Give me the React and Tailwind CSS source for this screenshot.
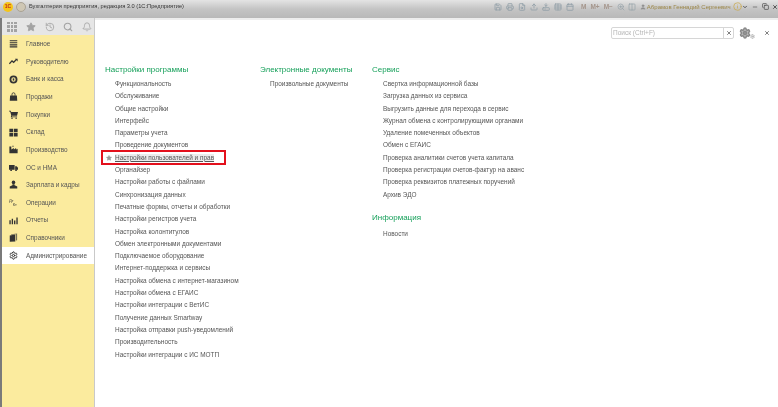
import React from 'react'
import { History, Search, Bell, X, Save, Printer, FileSearch, Upload, HardDriveDownload, Table, Calendar, ZoomIn, Columns2, Info, ChevronDown, Minus, Copy, Settings, Star, User } from 'lucide-react'

const Svg = ({ children, className = 'size-[9px]' }) => (
  <svg viewBox="0 0 12 12" className={`${className} shrink-0`} fill="currentColor">{children}</svg>
)

const MenuIcon = () => <Svg><path d="M1 1.5h10v1.6H1zM1 4.2h10v1.6H1zM1 6.9h10v1.6H1zM1 9.6h10v1.6H1z" /></Svg>
const TrendIcon = () => <Svg><path d="M.5 9 4 5.2l2.2 1.9L9.4 3.6" fill="none" stroke="currentColor" strokeWidth="1.7" /><path d="M8 2.4h3.5v3.5z" /></Svg>
const BankIcon = () => <Svg><path fillRule="evenodd" d="M6 .7a5.3 5.3 0 1 1 0 10.6A5.3 5.3 0 0 1 6 .7zm0 2.4a2.9 2.9 0 1 0 0 5.8 2.9 2.9 0 0 0 0-5.8z" /><path d="M5 4.5h2v3H5z" /></Svg>
const BagIcon = () => <Svg><path d="M1.5 4.5h9l.5 7H1z" /><path d="M4 5V3a2 2 0 0 1 4 0v2" fill="none" stroke="currentColor" strokeWidth="1.1" /></Svg>
const CartIcon = () => <Svg><path d="M0 1h2.4l.5 1.6H12l-1.3 5H4l-.2.9h7v1.1H2.4l.6-2.4L1.6 2.1H0z" /><circle cx="4" cy="11" r="1" /><circle cx="9.5" cy="11" r="1" /></Svg>
const GridIcon = () => <Svg><path d="M.5 1h5v4.6h-5zM6.5 1h5v4.6h-5zM.5 6.6h5v4.6h-5zM6.5 6.6h5v4.6h-5z" /></Svg>
const FactoryIcon = () => <Svg><path d="M.5 11V2h2.6v4L6.5 4v2l3-2v2l2-1v6z" /><path d="M4.5 1h1.6v1.4H4.5z" /></Svg>
const TruckIcon = () => <Svg><path d="M0 2.5h7.5v6.6H0zM8.2 4.4h2l1.8 2v2.7H8.2z" /><circle cx="2.8" cy="9.6" r="1.2" /><circle cx="9.4" cy="9.6" r="1.2" /></Svg>
const PersonIcon = () => <Svg><circle cx="6" cy="3.2" r="2.4" /><path d="M4.6 5.6h2.8v1.5l3.6 1.4v2.8H1V8.5l3.6-1.4z" /></Svg>
const OperationsIcon = () => (
  <svg viewBox="0 0 12 12" className="size-[9px] shrink-0" fill="currentColor">
    <text x="0" y="5" fontSize="5.4">Дт</text>
    <text x="5" y="11" fontSize="5.4">Кт</text>
  </svg>
)
const ChartIcon = () => <Svg><path d="M.5 5.5h1.8v5.5H.5zM3.6 3.5h1.8V11H3.6zM6.7 6h1.8v5H6.7zM9.8 2h1.8v9H9.8z" /></Svg>
const BooksIcon = () => <Svg><path d="M1 3.4 8.4 2v9.4L1 11.8z" /><path d="M3 1.6 10.8.6v9.2l-1.4.3V1.8l-6.4 .9z" opacity=".7" /></Svg>
const GridDots = () => (
  <div className="grid grid-cols-3 gap-[1px] size-[10px] shrink-0">
    {Array.from({ length: 9 }).map((_, i) => <span key={i} className="bg-[#a3a3a3]" />)}
  </div>
)

const navItems = [
  { label: 'Главное', icon: MenuIcon },
  { label: 'Руководителю', icon: TrendIcon },
  { label: 'Банк и касса', icon: BankIcon },
  { label: 'Продажи', icon: BagIcon },
  { label: 'Покупки', icon: CartIcon },
  { label: 'Склад', icon: GridIcon },
  { label: 'Производство', icon: FactoryIcon },
  { label: 'ОС и НМА', icon: TruckIcon },
  { label: 'Зарплата и кадры', icon: PersonIcon },
  { label: 'Операции', icon: OperationsIcon },
  { label: 'Отчеты', icon: ChartIcon },
  { label: 'Справочники', icon: BooksIcon },
  { label: 'Администрирование', icon: () => <Settings className="size-[9px] shrink-0" strokeWidth={2.6} />, active: true },
]

const settings = [
  'Функциональность', 'Обслуживание', 'Общие настройки', 'Интерфейс', 'Параметры учета', 'Проведение документов',
  'Настройки пользователей и прав', 'Органайзер', 'Настройки работы с файлами', 'Синхронизация данных',
  'Печатные формы, отчеты и обработки', 'Настройки регистров учета', 'Настройка колонтитулов',
  'Обмен электронными документами', 'Подключаемое оборудование', 'Интернет-поддержка и сервисы',
  'Настройка обмена с интернет-магазином', 'Настройки обмена с ЕГАИС', 'Настройки интеграции с ВетИС',
  'Получение данных Smartway', 'Настройка отправки push-уведомлений', 'Производительность', 'Настройки интеграции с ИС МОТП',
]

const service = [
  'Свертка информационной базы', 'Загрузка данных из сервиса', 'Выгрузить данные для перехода в сервис',
  'Журнал обмена с контролирующими органами', 'Удаление помеченных объектов', 'Обмен с ЕГАИС',
  'Проверка аналитики счетов учета капитала', 'Проверка регистрации счетов-фактур на аванс',
  'Проверка реквизитов платежных поручений', 'Архив ЭДО',
]

const Heading = ({ children }) => (
  <h2 className="h-[14px] text-[8px] leading-[14px] font-normal text-[#16a05a] whitespace-nowrap">{children}</h2>
)

const Link = ({ children, highlight }) => {
  if (highlight) {
    return (
      <li className="relative h-[12.3px] pl-[10px] whitespace-nowrap leading-[12.3px]">
        <Star className="absolute left-[1px] top-[3px] size-[6px] fill-[#9a9a9a] text-[#9a9a9a]" />
        <span className="underline bg-[#ececec]">{children}</span>
        <span className="absolute -left-[4px] -top-[2px] w-[125px] h-[15px] border-2 border-[#e3101c]" />
      </li>
    )
  }
  return <li className="h-[12.3px] pl-[10px] whitespace-nowrap leading-[12.3px]">{children}</li>
}

const toolIcons = [Save, Printer, FileSearch, Upload, HardDriveDownload, Table, Calendar]

export default function App() {
  return (
    <div className="w-[778px] h-[407px] overflow-hidden flex flex-col bg-white font-['Liberation_Sans',Arial,sans-serif] blur-[0.35px]">
      {/* Title bar */}
      <header className="h-[18px] shrink-0 flex items-center pb-[5px] bg-gradient-to-b from-[#e4e4e4] via-[#c4c4c4] to-[#b8b8b8]">
        <div className="ml-[3px] size-[10px] rounded-full bg-[#f5c518] flex items-center justify-center text-[5px] font-bold text-[#c2281c]">1С</div>
        <div className="ml-[3px] size-[10px] rounded-full bg-[#cfc7b4] border border-[#a9a294]" />
        <span className="ml-[3px] text-[5.7px] text-[#333333] whitespace-nowrap">Бухгалтерия предприятия, редакция 3.0 (1С:Предприятие)</span>
        <div className="ml-auto flex items-center w-[284px] shrink-0 text-[#93a0a8]">
          <div className="flex items-center gap-[4px]">
            {toolIcons.map((Icon, i) => <Icon key={i} className="size-[8px]" strokeWidth={2.5} />)}
          </div>
          <div className="ml-[7px] flex items-center gap-[4px] text-[6.5px] font-bold text-[#a5968c]">
            <span>M</span><span>M+</span><span>M−</span>
          </div>
          <ZoomIn className="ml-[4px] size-[8px]" />
          <Columns2 className="ml-[3px] size-[8px]" />
          <User className="ml-[4px] size-[6px] fill-[#8f8f8f] text-[#8f8f8f]" />
          <span className="ml-[1px] w-[85px] whitespace-nowrap text-[6px] leading-[10px] text-[#9c8748]">Абрамов Геннадий Сергеевич</span>
          <Info className="ml-[1px] size-[9px] text-[#c9a94f]" />
          <ChevronDown className="size-[6px] text-[#333333]" strokeWidth={3} />
          <Minus className="ml-[4px] size-[6px] text-[#333333]" />
          <Copy className="ml-[4px] size-[7px] text-[#333333]" />
          <X className="ml-[3px] size-[6px] text-[#333333]" strokeWidth={3} />
        </div>
      </header>

      <div className="flex-1 flex min-h-0">
        <div className="w-[2px] shrink-0 bg-[#7a7a7a]" />
        {/* Sidebar */}
        <aside className="w-[93px] shrink-0 flex flex-col bg-[#fbeb9e] border-r border-[#c9c9c9]">
          <div className="h-[17px] shrink-0 flex items-center gap-[8.75px] pl-[5px] bg-[#e6e6e6] text-[#a3a3a3]">
            <GridDots />
            <Star className="size-[10px] fill-[#a3a3a3]" />
            <History className="size-[10px]" />
            <Search className="size-[10px]" strokeWidth={2.6} />
            <Bell className="size-[10px]" />
          </div>
          <nav>
            {navItems.map(({ label, icon: Icon, active }) => (
              <div key={label} className={`h-[17.65px] flex items-center pl-[6.5px] text-[6.4px] whitespace-nowrap text-[#333333] ${active ? 'bg-white' : ''}`}>
                <Icon />
                <span className="ml-[8.5px] text-[#555555]">{label}</span>
              </div>
            ))}
          </nav>
        </aside>

        {/* Main */}
        <main className="flex-1 min-w-0 border-t-2 border-[#ededed]">
          <div className="flex justify-end items-center mt-[7px] h-[12px]">
            <div className="w-[123px] h-[12px] flex items-center border border-[#d6d6d6] rounded-[2px] text-[6.5px] text-[#b5b5b5] mr-[5px]">
              <span className="flex-1 pl-[1px]">Поиск (Ctrl+F)</span>
              <span className="w-[10px] h-full flex items-center justify-center border-l border-[#d6d6d6]"><X className="size-[6px] text-[#555555]" strokeWidth={3} /></span>
            </div>
            <Settings className="size-[12px] text-[#8a8a8a] fill-[#8a8a8a]/60" strokeWidth={3} />
            <Settings className="size-[5px] -ml-[1px] mt-[7px] text-[#a5a5a5]" strokeWidth={3} />
            <X className="ml-[9px] mr-[8px] size-[6px] text-[#555555]" strokeWidth={3} />
          </div>

          <div className="flex pl-[10px] pt-[24px] text-[6.45px] text-[#555555]">
            <section className="w-[155px] shrink-0">
              <Heading>Настройки программы</Heading>
              <ul className="mt-[1px]">
                {settings.map((s) => <Link key={s} highlight={s === 'Настройки пользователей и прав'}>{s}</Link>)}
              </ul>
            </section>
            <section className="w-[112px] shrink-0">
              <Heading>Электронные документы</Heading>
              <ul className="mt-[1px]"><Link>Произвольные документы</Link></ul>
            </section>
            <section>
              <Heading>Сервис</Heading>
              <ul className="mt-[1px] [&>li]:pl-[11px]">
                {service.map((s) => <Link key={s}>{s}</Link>)}
              </ul>
              <div className="mt-[10px]">
                <Heading>Информация</Heading>
                <ul className="mt-[3px] [&>li]:pl-[11px]"><Link>Новости</Link></ul>
              </div>
            </section>
          </div>
        </main>
      </div>
    </div>
  )
}
